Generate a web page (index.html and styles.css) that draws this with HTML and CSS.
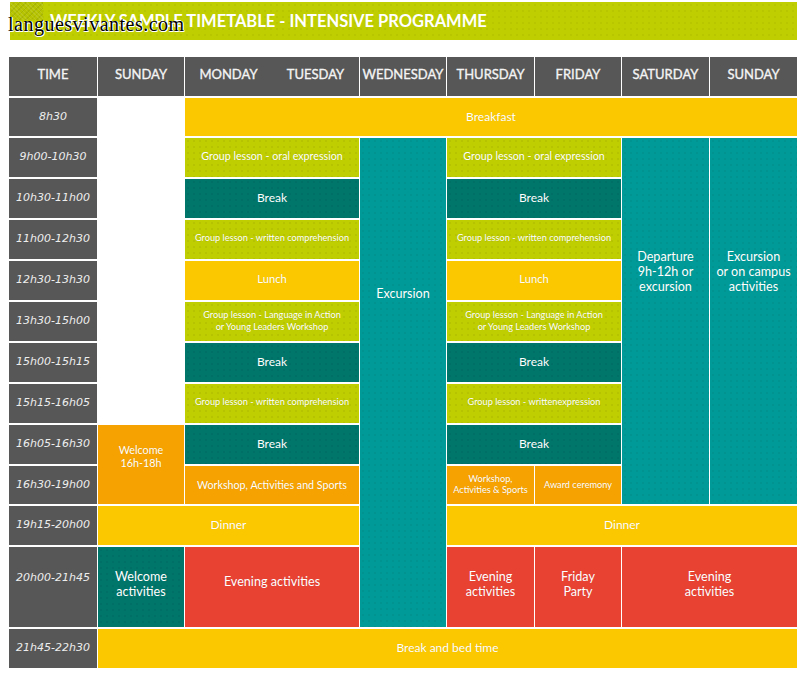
FILE: index.html
```html
<!DOCTYPE html>
<html lang="en">
<head>
<meta charset="utf-8">
<title>Weekly sample timetable - intensive programme</title>
<link rel="stylesheet" href="styles.css">
</head>
<body>
<div class="page">
  <div class="title">
    <span class="patch"></span>
    <h1>WEEKLY SAMPLE TIMETABLE - INTENSIVE PROGRAMME</h1>
  </div>
  <div class="watermark">languesvivantes.com</div>

  <div class="grid">
    <!-- header -->
    <div class="cell hd">TIME</div>
    <div class="cell hd">SUNDAY</div>
    <div class="cell hd split s2"><span>MONDAY</span><span>TUESDAY</span></div>
    <div class="cell hd">WEDNESDAY</div>
    <div class="cell hd">THURSDAY</div>
    <div class="cell hd">FRIDAY</div>
    <div class="cell hd">SATURDAY</div>
    <div class="cell hd">SUNDAY</div>

    <!-- 8h30 -->
    <div class="cell tm">8h30</div>
    <div class="cell blank r8"></div>
    <div class="cell yellow s7 f12">Breakfast</div>

    <!-- 9h00 -->
    <div class="cell tm">9h00-10h30</div>
    <div class="cell lime tx s2 up1">Group lesson - oral expression</div>
    <div class="cell teal tx r11 f13 exc">Excursion</div>
    <div class="cell lime tx s2 up1">Group lesson - oral expression</div>
    <div class="cell teal tx r9 f13 dep">Departure<br>9h-12h or<br>excursion</div>
    <div class="cell teal tx r9 f13 dep">Excursion<br>or on campus<br>activities</div>

    <!-- 10h30 -->
    <div class="cell tm">10h30-11h00</div>
    <div class="cell dteal tx s2 f12">Break</div>
    <div class="cell dteal tx s2 f12">Break</div>

    <!-- 11h00 -->
    <div class="cell tm">11h00-12h30</div>
    <div class="cell lime tx s2 sm up1">Group lesson - written comprehension</div>
    <div class="cell lime tx s2 sm up1">Group lesson - written comprehension</div>

    <!-- 12h30 -->
    <div class="cell tm">12h30-13h30</div>
    <div class="cell yellow s2 f11 up1">Lunch</div>
    <div class="cell yellow s2 f11 up1">Lunch</div>

    <!-- 13h30 -->
    <div class="cell tm">13h30-15h00</div>
    <div class="cell lime tx s2 sm two">Group lesson - Language in Action<br>or Young Leaders Workshop</div>
    <div class="cell lime tx s2 sm two">Group lesson - Language in Action<br>or Young Leaders Workshop</div>

    <!-- 15h00 -->
    <div class="cell tm">15h00-15h15</div>
    <div class="cell dteal tx s2 f12">Break</div>
    <div class="cell dteal tx s2 f12">Break</div>

    <!-- 15h15 -->
    <div class="cell tm">15h15-16h05</div>
    <div class="cell lime tx s2 sm up1">Group lesson - written comprehension</div>
    <div class="cell lime tx s2 sm up1">Group lesson - writtenexpression</div>

    <!-- 16h05 -->
    <div class="cell tm">16h05-16h30</div>
    <div class="cell orange r2 wel">Welcome<br>16h-18h</div>
    <div class="cell dteal tx s2 f12">Break</div>
    <div class="cell dteal tx s2 f12">Break</div>

    <!-- 16h30 -->
    <div class="cell tm">16h30-19h00</div>
    <div class="cell orange s2">Workshop, Activities and Sports</div>
    <div class="cell orange sm two">Workshop,<br>Activities &amp; Sports</div>
    <div class="cell orange sm">Award ceremony</div>

    <!-- 19h15 -->
    <div class="cell tm">19h15-20h00</div>
    <div class="cell yellow s3 f12">Dinner</div>
    <div class="cell yellow s4 f12">Dinner</div>

    <!-- 20h00 -->
    <div class="cell tm up20">20h00-21h45</div>
    <div class="cell dteal tx f13 eve">Welcome<br>activities</div>
    <div class="cell red s2 f13 eve1">Evening activities</div>
    <div class="cell red f13 eve">Evening<br>activities</div>
    <div class="cell red f13 eve">Friday<br>Party</div>
    <div class="cell red s2 f13 eve">Evening<br>activities</div>

    <!-- 21h45 -->
    <div class="cell tm">21h45-22h30</div>
    <div class="cell yellow s8 f12">Break and bed time</div>
  </div>
</div>
</body>
</html>
```

FILE: styles.css
```css
* {
  box-sizing: border-box;
}

body {
  margin: 0;
  background: #ffffff;
  font-family: Lato, "Open Sans", sans-serif;
}

.page {
  position: relative;
  width: 806px;
  padding: 2px 9px 0 9px;
}

/* ---------- title bar ---------- */
.title {
  position: relative;
  margin-left: 1px;
  height: 38px;
  display: flex;
  align-items: center;
  padding-left: 40px;
  background-color: #bfce00;
  background-image: radial-gradient(circle, rgba(0, 0, 0, 0.04) 0.7px, transparent 1.1px);
  background-size: 6px 6px;
}

.title h1 {
  margin: 0;
  font-size: 16.5px;
  font-weight: 700;
  color: #ffffff;
  letter-spacing: 0;
  white-space: nowrap;
}

.patch {
  position: absolute;
  left: 0;
  top: 0;
  width: 33px;
  height: 18px;
  background-color: #b5c300;
  background-image:
    repeating-linear-gradient(45deg, rgba(255, 255, 255, 0.10) 0 1px, transparent 1px 3px),
    repeating-linear-gradient(-45deg, rgba(0, 0, 0, 0.08) 0 1px, transparent 1px 4px);
}

.watermark {
  position: absolute;
  left: 8px;
  top: 13px;
  font-family: "Liberation Serif", "Times New Roman", serif;
  font-size: 20px;
  letter-spacing: 0.5px;
  color: #000000;
  text-shadow: 1px 1px 0 #ffffff, 1px 0 0 #ffffff, 0 1px 0 #ffffff;
  white-space: nowrap;
}

/* ---------- timetable grid ---------- */
.grid {
  margin-top: 17px;
  display: grid;
  grid-template-columns: 88px 86px 87px 86px 86px 87px 86px 87px 87px;
  grid-template-rows: 39px 38px repeat(8, 39px) 38px 39px 80px 39px;
  column-gap: 1px;
  row-gap: 2px;
}

.cell {
  display: flex;
  align-items: center;
  justify-content: center;
  text-align: center;
  color: #ffffff;
  font-size: 10.7px;
  line-height: 15px;
  padding-bottom: 2px;
  text-shadow: 0 0 1px rgba(0, 0, 0, 0.12);
}

.hd {
  background: #575757;
  font-size: 13px;
  font-weight: 400;
  color: #f4f4f4;
  padding-bottom: 5px;
  -webkit-text-stroke: 0.35px #f4f4f4;
}

.split > span {
  flex: 1;
  text-align: center;
}

.tm {
  background: #575757;
  font-family: "DejaVu Sans", Verdana, sans-serif;
  font-style: italic;
  font-size: 11px;
  color: #eeeeee;
  text-shadow: none;
}

.blank { background: #ffffff; }
.lime { background-color: #bfce00; }
.teal { background-color: #009b98; }
.dteal { background-color: #00766b; }
.yellow { background-color: #fbc800; }
.orange { background-color: #f6a200; }
.red { background-color: #e84233; }

.tx {
  background-image: radial-gradient(circle, rgba(0, 0, 0, 0.05) 0.7px, transparent 1.1px);
  background-size: 6px 6px;
}

/* spans */
.s2 { grid-column: span 2; }
.s3 { grid-column: span 3; }
.s4 { grid-column: span 4; }
.s7 { grid-column: span 7; }
.s8 { grid-column: span 8; }
.r2 { grid-row: span 2; }
.r8 { grid-row: span 8; }
.r9 { grid-row: span 9; }
.r11 { grid-row: span 11; }

/* text sizes */
.f11 { font-size: 11.2px; }
.f12 { font-size: 12px; }
.f13 { font-size: 12.6px; }
.sm { font-size: 9.2px; }
.two { line-height: 11.4px; }

/* vertical text placement */
.up1 { padding-bottom: 5px; }
.exc { padding-bottom: 179px; }
.dep { padding-bottom: 100px; }
.wel { padding-bottom: 17px; line-height: 13.5px; font-size: 10.8px; }
.eve { padding-bottom: 6px; }
.eve1 { padding-bottom: 11px; }
.up20 { padding-bottom: 20px; }
```
